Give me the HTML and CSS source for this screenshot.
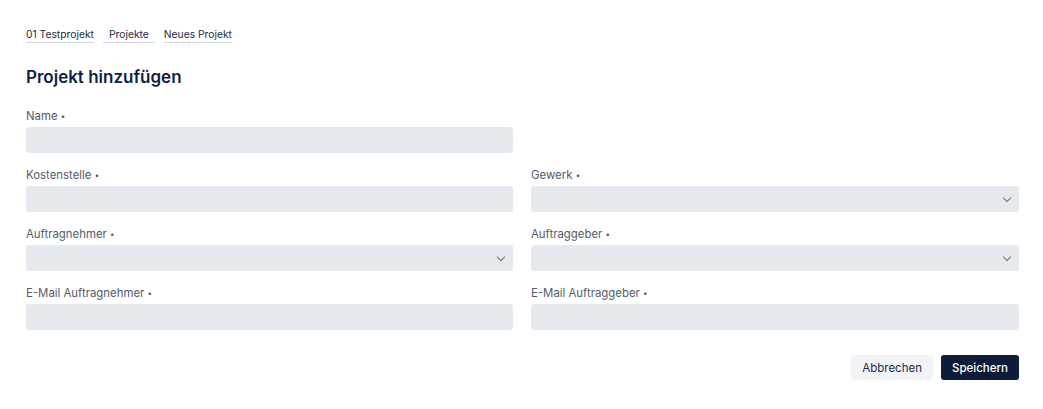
FILE: index.html
```html
<!DOCTYPE html>
<html lang="de">
<head>
  <meta charset="UTF-8">
  <meta name="viewport" content="width=device-width, initial-scale=1.0">
  <title>Projekt hinzufügen</title>
  <link rel="stylesheet" href="styles.css">
</head>
<body>
  <div class="page">
    <nav class="crumbs">
      <a href="#">01 Testprojekt</a>
      <a href="#" class="pad">Projekte</a>
      <a href="#">Neues Projekt</a>
    </nav>

    <h1>Projekt hinzufügen</h1>

    <form class="form">
      <div class="field">
        <label>Name <span class="req">•</span></label>
        <input type="text">
      </div>
      <div></div>

      <div class="field">
        <label>Kostenstelle <span class="req">•</span></label>
        <input type="text">
      </div>
      <div class="field">
        <label>Gewerk <span class="req">•</span></label>
        <div class="select"><span class="chev"></span></div>
      </div>

      <div class="field">
        <label>Auftragnehmer <span class="req">•</span></label>
        <div class="select"><span class="chev"></span></div>
      </div>
      <div class="field">
        <label>Auftraggeber <span class="req">•</span></label>
        <div class="select"><span class="chev"></span></div>
      </div>

      <div class="field">
        <label>E-Mail Auftragnehmer <span class="req">•</span></label>
        <input type="text">
      </div>
      <div class="field">
        <label>E-Mail Auftraggeber <span class="req">•</span></label>
        <input type="text">
      </div>
    </form>

    <div class="actions">
      <button class="btn light">Abbrechen</button>
      <button class="btn dark">Speichern</button>
    </div>
  </div>
</body>
</html>
```

FILE: styles.css
```css
body {
  margin: 0;
  font-family: Inter, "Noto Sans", sans-serif;
  background: #fff;
  color: #111c36;
}

.page {
  padding: 27px 24px 0 26px;
}

.crumbs {
  display: flex;
  gap: 9px;
}

.crumbs a {
  font-size: 10.3px;
  color: #1f2a44;
  text-decoration: none;
  line-height: 14px;
  padding-bottom: 1px;
  border-bottom: 1px solid #d4d8de;
}

.crumbs a.pad {
  padding: 0 6px 1px;
}

h1 {
  margin: 22px 0 20px;
  font-size: 17px;
  font-weight: 600;
  line-height: 24px;
  color: #0f1f3d;
}

.form {
  display: grid;
  grid-template-columns: 487px 1fr;
  column-gap: 18px;
  row-gap: 15px;
}

.field label {
  display: block;
  font-size: 11.4px;
  line-height: 14px;
  color: #525b6a;
  margin-bottom: 4px;
}

.req {
  font-size: 8px;
  vertical-align: 1px;
}

.field input,
.select {
  display: block;
  box-sizing: border-box;
  width: 100%;
  height: 26px;
  border: none;
  border-radius: 3px;
  background: #e6e9ee;
  margin: 0;
}

.select {
  position: relative;
}

.chev {
  position: absolute;
  right: 9px;
  top: 9px;
  width: 5px;
  height: 5px;
  border-right: 1.5px solid #6b7280;
  border-bottom: 1.5px solid #6b7280;
  transform: rotate(45deg);
}

.actions {
  display: flex;
  justify-content: flex-end;
  gap: 8px;
  margin-top: 25px;
}

.btn {
  font-family: inherit;
  font-size: 11.5px;
  height: 25px;
  border: none;
  border-radius: 3px;
  padding: 0 11px;
  cursor: pointer;
}

.btn.light {
  background: #f1f3f6;
  color: #1f2a44;
}

.btn.dark {
  background: #0d1c3a;
  color: #fff;
  font-weight: 500;
}
```
